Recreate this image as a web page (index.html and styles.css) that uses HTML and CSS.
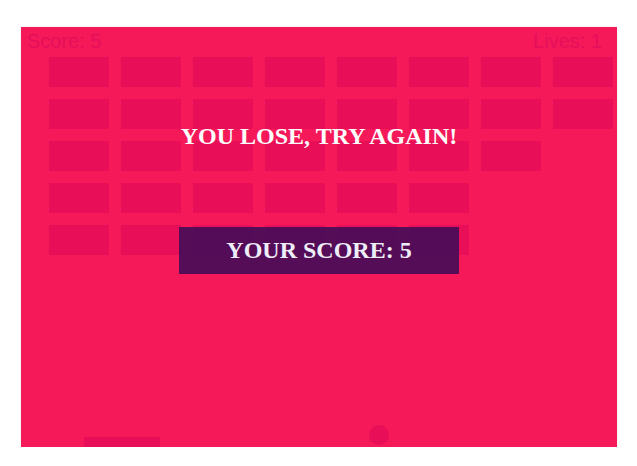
FILE: index.html
```html
<!DOCTYPE html>
<html lang="en">
<head>
<meta charset="utf-8">
<title>Breakout</title>
<link rel="stylesheet" href="styles.css">
</head>
<body>
<div class="stage">
  <div class="game">
    <div class="hud">
      <span>Score: 5</span>
      <span>Lives: 1</span>
    </div>
    <div class="bricks">
      <div class="brick"></div><div class="brick"></div><div class="brick"></div><div class="brick"></div><div class="brick"></div><div class="brick"></div><div class="brick"></div><div class="brick"></div>
      <div class="brick"></div><div class="brick"></div><div class="brick"></div><div class="brick"></div><div class="brick"></div><div class="brick"></div><div class="brick"></div><div class="brick"></div>
      <div class="brick"></div><div class="brick"></div><div class="brick"></div><div class="brick"></div><div class="brick"></div><div class="brick"></div><div class="brick"></div><div class="brick gone"></div>
      <div class="brick"></div><div class="brick"></div><div class="brick"></div><div class="brick"></div><div class="brick"></div><div class="brick"></div><div class="brick gone"></div><div class="brick gone"></div>
      <div class="brick"></div><div class="brick"></div><div class="brick"></div><div class="brick"></div><div class="brick"></div><div class="brick"></div><div class="brick gone"></div><div class="brick gone"></div>
    </div>
    <div class="ball"></div>
    <div class="paddle"></div>
    <div class="message">YOU LOSE, TRY AGAIN!</div>
    <div class="final">YOUR SCORE: 5</div>
  </div>
</div>
</body>
</html>
```

FILE: styles.css
```css
html, body {
  margin: 0;
  padding: 0;
  background: #ffffff;
}

.stage {
  display: flex;
  justify-content: center;
  padding-top: 27px;
}

.game {
  position: relative;
  width: 596px;
  height: 420px;
  background: #f5195a;
  box-shadow: 0 0 2px rgba(0, 0, 0, 0.12);
  overflow: hidden;
  margin-left: 1px;
}

.hud {
  display: flex;
  justify-content: space-between;
  height: 30px;
  padding: 0 15px 0 6px;
  font-family: "Liberation Sans", Arial, sans-serif;
  font-size: 20px;
  line-height: 28px;
  color: #e60f5a;
}

.bricks {
  display: grid;
  grid-template-columns: repeat(8, 60px);
  grid-auto-rows: 30px;
  gap: 12px;
  padding-left: 28px;
}

.brick {
  background: #e80e58;
}

.brick.gone {
  visibility: hidden;
}

.ball {
  position: absolute;
  left: 348px;
  top: 398px;
  width: 20px;
  height: 20px;
  border-radius: 50%;
  background: #e80e58;
}

.paddle {
  position: absolute;
  left: 63px;
  top: 410px;
  width: 76px;
  height: 10px;
  background: #e80e58;
}

.message {
  position: absolute;
  left: 0;
  right: 0;
  top: 94px;
  text-align: center;
  font-family: "Liberation Serif", "Times New Roman", serif;
  font-weight: bold;
  font-size: 24px;
  line-height: 30px;
  color: #ffffff;
}

.final {
  position: absolute;
  left: 158px;
  top: 200px;
  width: 280px;
  height: 47px;
  background: rgba(58, 12, 88, 0.85);
  text-align: center;
  font-family: "Liberation Serif", "Times New Roman", serif;
  font-weight: bold;
  font-size: 24px;
  line-height: 47px;
  color: #eeeef8;
}
```
